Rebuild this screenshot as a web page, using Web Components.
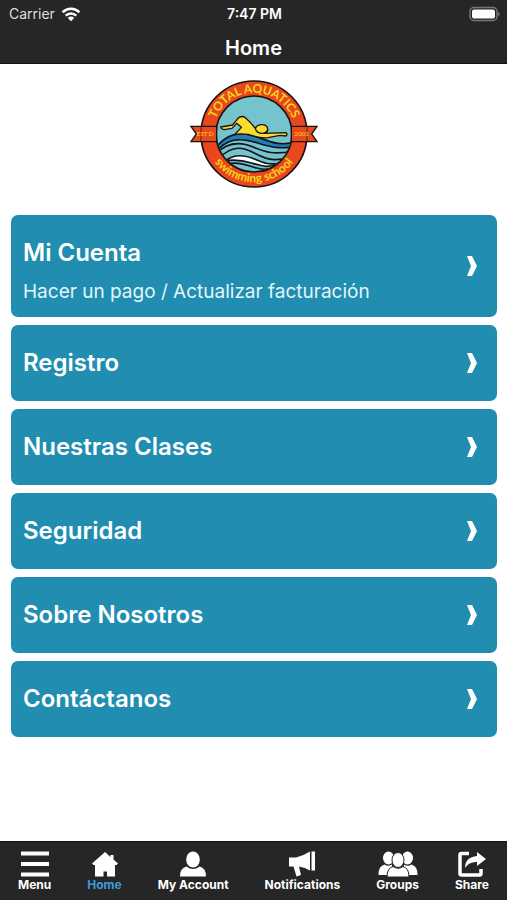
<!DOCTYPE html>
<html lang="es">
<head>
<meta charset="utf-8">
<meta name="viewport" content="width=device-width, initial-scale=1">
<title>Home</title>
<style>
  html, body { height: 100%; }
  body { margin: 0; background: #fff; font-family: Inter, "Liberation Sans", sans-serif; }
</style>
</head>
<body>
<swim-app>
  <status-bar slot="header" carrier="Carrier" time="7:47 PM"></status-bar>
  <title-bar slot="header">Home</title-bar>

  <school-logo></school-logo>
  <menu-list>
    <menu-card href="#cuenta">Mi Cuenta<span slot="detail">Hacer un pago / Actualizar facturación</span></menu-card>
    <menu-card href="#registro">Registro</menu-card>
    <menu-card href="#clases">Nuestras Clases</menu-card>
    <menu-card href="#seguridad">Seguridad</menu-card>
    <menu-card href="#nosotros">Sobre Nosotros</menu-card>
    <menu-card href="#contacto">Contáctanos</menu-card>
  </menu-list>

  <tab-bar slot="footer">
    <tab-item icon="menu">Menu</tab-item>
    <tab-item icon="home" active>Home</tab-item>
    <tab-item icon="account">My Account</tab-item>
    <tab-item icon="notifications">Notifications</tab-item>
    <tab-item icon="groups">Groups</tab-item>
    <tab-item icon="share">Share</tab-item>
  </tab-bar>
</swim-app>

<script>
/**
 * Creates a template element from a markup string.
 *
 * @param {string} html - The markup.
 * @returns {HTMLTemplateElement} The template.
 */
function createTemplate(html) {
  const template = document.createElement('template')
  template.innerHTML = html
  return template
}

/**
 * Base class that clones a template into an open shadow root.
 */
class TemplateElement extends HTMLElement {
  /**
   * Creates an instance of the current type.
   */
  constructor() {
    super()
    this.attachShadow({ mode: 'open' })
      .appendChild(this.constructor.template.content.cloneNode(true))
  }
}

customElements.define('swim-app',
  /**
   * Represents the page frame: header, scrolling content and footer.
   */
  class extends TemplateElement {
    static template = createTemplate(`
      <style>
        :host { display: flex; flex-direction: column; min-height: 100%; }
        header { background: #262626; color: #fff; border-bottom: 1px solid #111; }
        main { flex: 1; padding: 10px 10px 24px 11px; }
        footer { position: sticky; bottom: 0; }
      </style>
      <header><slot name="header"></slot></header>
      <main><slot></slot></main>
      <footer><slot name="footer"></slot></footer>
    `)
  }
)

customElements.define('status-bar',
  /**
   * Represents the phone status bar.
   */
  class extends TemplateElement {
    static template = createTemplate(`
      <style>
        :host {
          display: grid;
          grid-template-columns: 1fr auto 1fr;
          align-items: center;
          height: 27px;
          padding: 0 7px 0 9px;
          font-size: 14px;
        }
        .carrier { display: flex; align-items: center; gap: 6px; color: #dedede; }
        .time { font-weight: 600; }
        .battery { justify-self: end; }
        svg { display: block; }
      </style>
      <span class="carrier">
        <span id="carrier"></span>
        <svg width="20" height="16" viewBox="0 0 20 16" fill="none" stroke="#fff" stroke-width="2.600" aria-hidden="true">
          <path d="M1.600 6.200a12 12 0 0 1 16.800 0M4.700 9.600a7.600 7.600 0 0 1 10.600 0"/>
          <path d="M10 15.200l-3.200-3.300a4.700 4.700 0 0 1 6.400 0z" fill="#fff" stroke="none"/>
        </svg>
      </span>
      <span class="time" id="time"></span>
      <svg class="battery" width="31" height="16" viewBox="0 0 31 16" aria-hidden="true">
        <rect x="1" y="1.500" width="27" height="13" rx="4" fill="#262626" stroke="#777" stroke-width="1.500"/>
        <rect x="3" y="3.500" width="23" height="9" rx="2" fill="#fff"/>
        <path d="M29.300 5.500q3 2.500 0 5z" fill="#777"/>
      </svg>
    `)

    /**
     * Called after the element is inserted into the DOM.
     */
    connectedCallback() {
      this.shadowRoot.getElementById('carrier').textContent = this.getAttribute('carrier')
      this.shadowRoot.getElementById('time').textContent = this.getAttribute('time')
    }
  }
)

customElements.define('title-bar',
  /**
   * Represents the navigation bar title.
   */
  class extends TemplateElement {
    static template = createTemplate(`
      <style>
        :host { display: block; }
        h1 { margin: 0; padding: 9px 0 3px; font-size: 20px; line-height: 24px; font-weight: 600; text-align: center; }
      </style>
      <h1><slot></slot></h1>
    `)
  }
)

customElements.define('school-logo',
  /**
   * Represents the round swimming school badge.
   */
  class extends TemplateElement {
    static template = createTemplate(`
      <style>
        :host { display: flex; justify-content: center; margin-bottom: 21px; }
        svg { display: block; width: 138px; height: 120px; }
        text { font-family: Lato, "Liberation Sans", sans-serif; fill: #f9d616; }
      </style>
      <svg viewBox="0 0 414 360" role="img" aria-label="Total Aquatics swimming school">
        <defs>
          <path id="top" d="M83 180a124 124 0 0 1 248 0"/>
          <path id="bottom" d="M62 180a145 145 0 0 0 290 0"/>
          <clipPath id="sea"><circle cx="207" cy="180" r="112"/></clipPath>
        </defs>
        <circle cx="207" cy="180" r="159" fill="#e8471f" stroke="#1b1411" stroke-width="5"/>
        <circle cx="207" cy="180" r="114" fill="#74c3cd" stroke="#1b1411" stroke-width="5"/>
        <g clip-path="url(#sea)" stroke="#10151c" stroke-width="5">
          <path d="M92 222C125 180 160 174 200 184S270 218 325 206V218C260 230 230 206 185 199S120 206 92 232z" fill="#1f7fb4"/>
          <path d="M92 240C130 200 170 204 205 219S270 244 325 230" fill="none"/>
          <path d="M100 254C145 210 175 220 212 239S270 262 316 250" fill="none"/>
          <path d="M122 260C150 238 180 243 210 256S250 272 284 268C250 284 230 276 200 267S150 256 122 260z" fill="#fff"/>
          <path d="M128 270C165 262 190 276 215 282S245 286 262 282" fill="none"/>
        </g>
        <path d="M107 159L143 153 159 133Q169 123 181 131Q197 144 211 163Q217 151 233 152Q248 154 248 166Q248 174 240 178L303 176Q309 181 303 186L285 184 249 191Q228 193 210 187Q182 177 150 181L169 160 155 148 141 163 117 167Q108 165 107 159z" fill="#fadb2f" stroke="#1b1411" stroke-width="4" stroke-linejoin="round"/>
        <path d="M211 163Q214 178 234 178Q248 175 248 166" fill="none" stroke="#1b1411" stroke-width="4"/>
        <g fill="#e8471f" stroke="#1b1411" stroke-width="4">
          <path d="M18 157H95V203H18L34 180z"/>
          <path d="M396 157H319V203H396L380 180z"/>
          <path d="M48 157V203M366 157V203" stroke-width="2"/>
        </g>
        <text font-size="36" font-weight="700" text-anchor="middle"><textPath href="#top" startOffset="50%">TOTAL AQUATICS</textPath></text>
        <text font-size="36" font-weight="700" text-anchor="middle"><textPath href="#bottom" startOffset="50%">swimming school</textPath></text>
        <text x="60" y="187" font-size="19" text-anchor="middle">EST'D</text>
        <text x="350" y="187" font-size="19" text-anchor="middle">2001</text>
      </svg>
    `)
  }
)

customElements.define('menu-list',
  /**
   * Represents the vertical stack of menu cards.
   */
  class extends TemplateElement {
    static template = createTemplate(`
      <style>
        :host { display: block; }
        nav { display: flex; flex-direction: column; gap: 8px; }
      </style>
      <nav><slot></slot></nav>
    `)
  }
)

customElements.define('menu-card',
  /**
   * Represents one link card with an optional detail line.
   */
  class extends TemplateElement {
    static template = createTemplate(`
      <style>
        :host { display: block; }
        a {
          display: flex;
          align-items: center;
          justify-content: space-between;
          padding: 12px 19px 12px 12px;
          border-radius: 7px;
          background: #208db1;
          color: #fff;
          text-decoration: none;
        }
        .title { display: block; font-size: 24px; line-height: 52px; font-weight: 600; }
        ::slotted([slot="detail"]) { display: block; font-size: 19px; line-height: 26px; color: #e4f5fa; }
        svg { flex: none; display: block; }
      </style>
      <a>
        <span>
          <span class="title"><slot></slot></span>
          <slot name="detail"></slot>
        </span>
        <svg width="12" height="20" viewBox="0 0 12 20" fill="#fff" aria-hidden="true">
          <path d="M1 0H6L11 10 6 20H1L5 10z"/>
        </svg>
      </a>
    `)

    /**
     * Called after the element is inserted into the DOM.
     */
    connectedCallback() {
      this.shadowRoot.querySelector('a').href = this.getAttribute('href')
    }
  }
)

customElements.define('tab-bar',
  /**
   * Represents the bottom tab bar.
   */
  class extends TemplateElement {
    static template = createTemplate(`
      <style>
        :host { display: block; background: #262626; border-top: 1px solid #111; }
        nav { display: flex; justify-content: space-between; padding: 8px 18px; }
      </style>
      <nav><slot></slot></nav>
    `)
  }
)

// Drawings for the tab items.
const icons = {
  menu: `<svg width="30" height="27" viewBox="0 0 30 27">
    <path d="M1 1.500h28v4H1zM1 12h28v4H1zM1 22.500h28v4H1z"/></svg>`,
  home: `<svg width="26" height="27" viewBox="0 0 26 27">
    <path d="M13 2L18.500 7V5H21.500V9.600L26 13.500 24.500 15H23v11.500h-8V21.500h-3.500v5H3V15H1.500L0 13.500z"/></svg>`,
  account: `<svg width="26" height="27" viewBox="0 0 26 27">
    <ellipse cx="13" cy="9.500" rx="6.800" ry="8"/>
    <path d="M6.500 16.500Q13 21.500 19.500 16.500Q26 18 26 26.500H0Q0 18 6.500 16.500z"/></svg>`,
  notifications: `<svg width="28" height="27" viewBox="0 0 28 27">
    <path d="M1 7.500H8Q15 6 22 1.500V20.500Q17 17.500 11 16.500L13 25 8.500 26.500 5.500 16.500H1zM23.500 1.500H27V20.500H23.500z"/></svg>`,
  groups: `<svg width="40" height="27" viewBox="0 0 40 27">
    <ellipse cx="10.500" cy="8" rx="5.500" ry="6.500"/><ellipse cx="29.500" cy="8" rx="5.500" ry="6.500"/>
    <path d="M6.500 14.500Q10 17 14 14.500V25H.5Q0 16.500 6.500 14.500zM33.500 14.500Q30 17 26 14.500V25H39.500Q40 16.500 33.500 14.500z"/>
    <g stroke="#262626" stroke-width="1"><ellipse cx="20" cy="10" rx="6" ry="7.500"/>
    <path d="M15 16.500Q20 20 25 16.500Q31 18 31 27H9Q9 18 15 16.500z"/></g></svg>`,
  share: `<svg width="30" height="27" viewBox="0 0 30 27">
    <path d="M12 3.500H4.500Q3 3.500 3 5V23.500Q3 25 4.500 25H22.500Q24 25 24 23.500V19" fill="none" stroke="#fff" stroke-width="3.500"/>
    <path d="M20 2L29 9 20 16V12Q12 11.500 8 18Q8 7 20 6z"/></svg>`
}

customElements.define('tab-item',
  /**
   * Represents one tab: an icon above its label.
   */
  class extends TemplateElement {
    static template = createTemplate(`
      <style>
        :host { display: block; color: #fff; }
        :host([active]) { color: #3d9bdc; }
        button {
          display: flex;
          flex-direction: column;
          align-items: center;
          margin: 0;
          padding: 0;
          border: 0;
          background: none;
          color: inherit;
          font: 700 12px/15px Inter, "Liberation Sans", sans-serif;
          cursor: pointer;
        }
        svg { display: block; fill: #fff; }
      </style>
      <button type="button">
        <span id="icon" aria-hidden="true"></span>
        <slot></slot>
      </button>
    `)

    /**
     * Called after the element is inserted into the DOM.
     */
    connectedCallback() {
      this.shadowRoot.getElementById('icon').innerHTML = icons[this.getAttribute('icon')]
      if (this.hasAttribute('active')) {
        this.shadowRoot.querySelector('button').setAttribute('aria-current', 'page')
      }
    }
  }
)
</script>
</body>
</html>
